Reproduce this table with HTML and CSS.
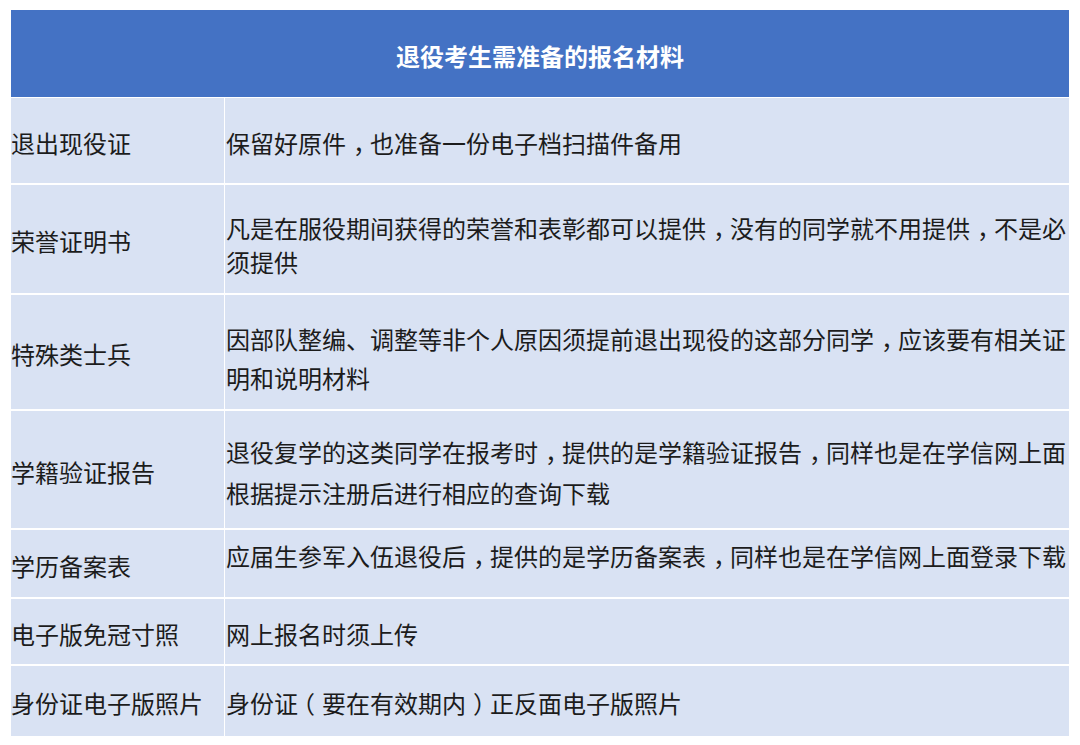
FILE: index.html
```html
<!DOCTYPE html>
<html lang="zh-CN">
<head>
<meta charset="utf-8">
<title>退役考生需准备的报名材料</title>
<link rel="stylesheet" href="styles.css">
</head>
<body>
<div class="page">
  <div class="table">
    <div class="head">退役考生需准备的报名材料</div>

    <div class="cell key">退出现役证</div>
    <div class="cell val">保留好原件<span class="p">，</span>也准备一份电子档扫描件备用</div>

    <div class="cell key">荣誉证明书</div>
    <div class="cell val v2">凡是在服役期间获得的荣誉和表彰都可以提供<span class="p">，</span>没有的同学就不用提供<span class="p">，</span>不是必须提供</div>

    <div class="cell key">特殊类士兵</div>
    <div class="cell val v3">因部队整编、调整等非个人原因须提前退出现役的这部分同学<span class="p">，</span>应该要有相关证明和说明材料</div>

    <div class="cell key">学籍验证报告</div>
    <div class="cell val v4">退役复学的这类同学在报考时<span class="p">，</span>提供的是学籍验证报告<span class="p">，</span>同样也是在学信网上面根据提示注册后进行相应的查询下载</div>

    <div class="cell key">学历备案表</div>
    <div class="cell val v5">应届生参军入伍退役后<span class="p">，</span>提供的是学历备案表<span class="p">，</span>同样也是在学信网上面登录下载</div>

    <div class="cell key">电子版免冠寸照</div>
    <div class="cell val">网上报名时须上传</div>

    <div class="cell key">身份证电子版照片</div>
    <div class="cell val">身份证<span class="po">（</span>要在有效期内<span class="p">）</span>正反面电子版照片</div>
  </div>
</div>
</body>
</html>
```

FILE: styles.css
```css
html, body {
  margin: 0;
  padding: 0;
  background: #ffffff;
}

.page {
  padding: 10px 11px 0 11px;
  font-family: "Noto Sans CJK SC", "Noto Sans", sans-serif;
}

.table {
  width: 1058px;
  display: grid;
  grid-template-columns: 213px 844px;
  grid-template-rows: 86px 85px 108px 114px 117px 67px 65px 70px;
  column-gap: 1px;
  row-gap: 2px;
  background: #ffffff;
}

.head {
  grid-column: 1 / 3;
  background: #4472c4;
  color: #ffffff;
  font-size: 24px;
  font-weight: bold;
  display: flex;
  align-items: center;
  justify-content: center;
  padding-top: 4px;
  box-sizing: border-box;
  margin-bottom: -1px;
}

.cell {
  background: #d9e2f3;
  color: #1c1c1c;
  font-size: 24px;
  line-height: 30px;
  padding-top: 4px;
  box-sizing: border-box;
  display: flex;
  align-items: center;
}

.val {
  padding-left: 1px;
  display: block;
  align-content: center;
}

/* full-width punctuation drawn centred in its box */
.p {
  padding-left: 7px;
  letter-spacing: -7px;
}

.po {
  margin-left: -7px;
  padding-right: 7px;
}

.v2 {
  line-height: 34px;
  padding-top: 11px;
}

.v3 {
  line-height: 39px;
  padding-top: 12px;
}

.v4 {
  line-height: 41px;
  padding-top: 5px;
}

.v5 {
  padding-top: 0;
  padding-bottom: 16px;
}
```
